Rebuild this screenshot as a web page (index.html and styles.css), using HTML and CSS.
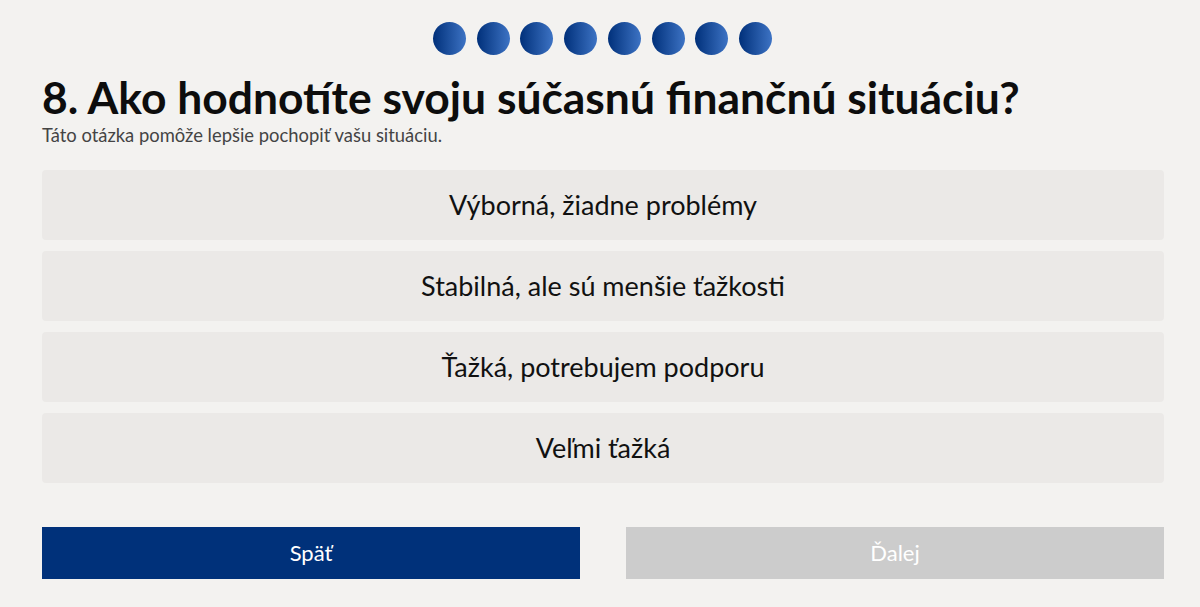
FILE: index.html
```html
<!DOCTYPE html>
<html lang="sk">
<head>
    <meta charset="UTF-8">
    <meta name="viewport" content="width=device-width, initial-scale=1.0">
    <title>Dotazník - otázka 8</title>
    <link rel="stylesheet" href="styles.css">
</head>
<body>
  <div class="quiz">
    <div class="progress">
      <span class="dot"></span>
      <span class="dot"></span>
      <span class="dot"></span>
      <span class="dot"></span>
      <span class="dot"></span>
      <span class="dot"></span>
      <span class="dot"></span>
      <span class="dot"></span>
    </div>

    <h1 class="question">8. Ako hodnotíte svoju súčasnú finančnú situáciu?</h1>
    <p class="hint">Táto otázka pomôže lepšie pochopiť vašu situáciu.</p>

    <div class="options">
      <button class="option">Výborná, žiadne problémy</button>
      <button class="option">Stabilná, ale sú menšie ťažkosti</button>
      <button class="option">Ťažká, potrebujem podporu</button>
      <button class="option">Veľmi ťažká</button>
    </div>

    <div class="nav-buttons">
      <button class="btn btn-back">Späť</button>
      <button class="btn btn-next" disabled>Ďalej</button>
    </div>
  </div>
</body>
</html>
```

FILE: styles.css
```css
/* Základ */
body {
    font-family: 'Lato', 'Noto Sans', sans-serif;
    margin: 0;
    padding: 0;
    background-color: #f3f2f0;
    color: #111;
}

.quiz {
    padding: 22px 36px 0 42px;
}

/* Indikátor postupu */
.progress {
    display: flex;
    justify-content: center;
    gap: 10.7px;
    margin-left: -1px;
}

.dot {
    width: 33px;
    height: 33px;
    border-radius: 50%;
    background: linear-gradient(to right, #00307a, #3d73c4);
}

/* Otázka */
.question {
    margin: 18px 0 0;
    font-size: 44.4px;
    font-weight: 700;
    line-height: 1.1;
    color: #0d0d0d;
}

.hint {
    margin: 2px 0 0;
    font-size: 18.4px;
    color: #444;
}

/* Možnosti */
.options {
    display: flex;
    flex-direction: column;
    gap: 11px;
    margin-top: 24px;
}

.option {
    height: 70px;
    border: none;
    border-radius: 4px;
    background-color: #ebe9e7;
    font-family: inherit;
    font-size: 27px;
    color: #111;
    cursor: pointer;
}

.option:hover {
    background-color: #e2e0dd;
}

/* Navigácia */
.nav-buttons {
    display: flex;
    gap: 46px;
    margin-top: 44px;
}

.btn {
    flex: 1;
    height: 52px;
    border: none;
    font-family: inherit;
    font-size: 22px;
    color: #fff;
    cursor: pointer;
}

.btn-back {
    background-color: #00317a;
}

.btn-next {
    background-color: #cccccc;
    cursor: default;
}
```
